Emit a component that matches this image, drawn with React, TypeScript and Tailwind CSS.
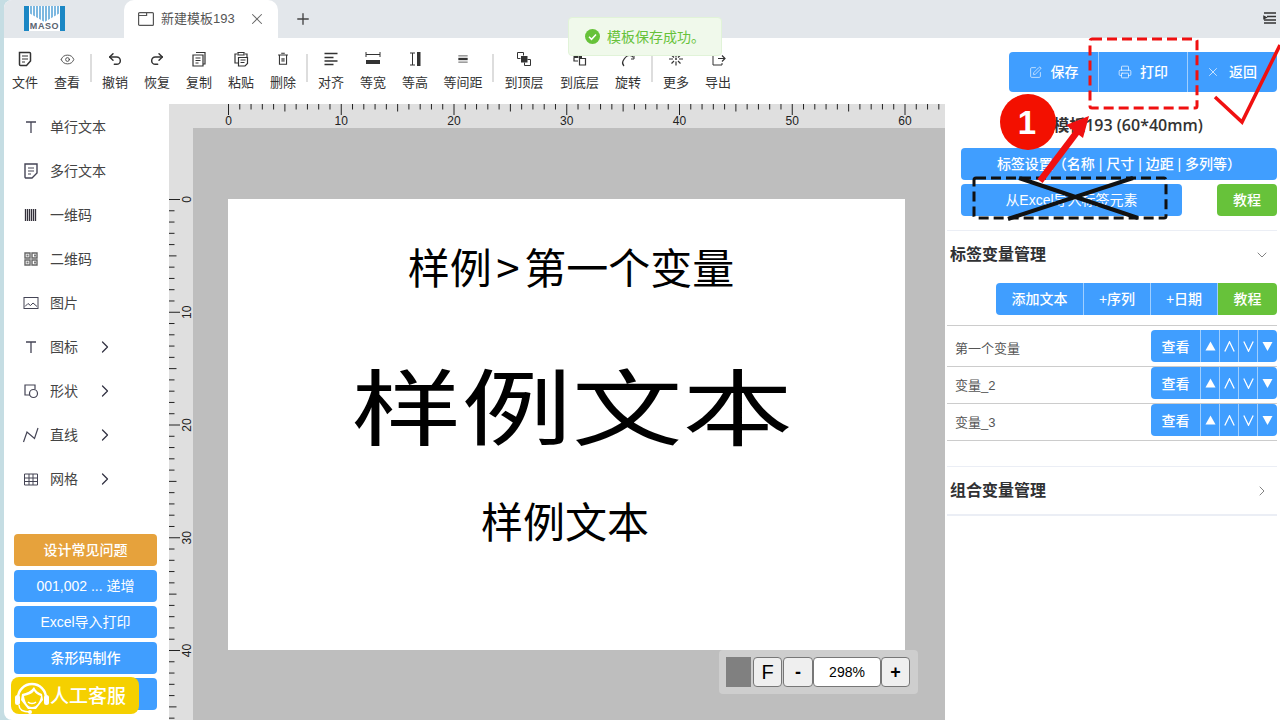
import { ChevronDown, ChevronRight, Eye, Plus, Redo2, Undo2, X, SquarePen, Printer } from 'lucide-react'
import type { ReactNode } from 'react'

const sv = (children: ReactNode, size = 18) => (
  <svg width={size} height={size} viewBox="0 0 18 18" fill="none" stroke="currentColor" strokeWidth="1.2">
    {children}
  </svg>
)

const tools: (null | { label: string; w: string; icon: ReactNode })[] = [
  { label: '文件', w: 'w-[42px]', icon: sv(<><path d="M3.5 2.5h10a1 1 0 0 1 1 1V11l-4 4.500H4.500a1 1 0 0 1-1-1z" strokeWidth="1.500" /><path d="M6 6h6M6 9h6M6 12h3" /></>) },
  { label: '查看', w: 'w-[42px]', icon: <Eye size={15} strokeWidth={1.3} /> },
  null,
  { label: '撤销', w: 'w-[42px]', icon: <Undo2 size={16} strokeWidth={2.2} /> },
  { label: '恢复', w: 'w-[42px]', icon: <Redo2 size={16} strokeWidth={2.2} /> },
  { label: '复制', w: 'w-[42px]', icon: sv(<><path d="M6 2.500h9v11.500h-2" /><path d="M3 5h10v11H3z" /><path d="M5.500 8h5M5.500 10.500h5M5.500 13h3" /></>) },
  { label: '粘贴', w: 'w-[42px]', icon: sv(<><path d="M5 4H3v9h3" /><path d="M13 4h2v4" /><path d="M6 2.500h6V5H6z" /><path d="M6.500 7.500h9v6l-2.500 2.500H6.500z" /><path d="M8.500 10h5M8.500 12.500h4" /></>) },
  { label: '删除', w: 'w-[42px]', icon: sv(<><path d="M3.500 4.500h11M7 2.500h4" /><path d="M5 4.500V15h8V4.500" /><path d="M8 8v4M10 8v4" /></>, 16) },
  null,
  { label: '对齐', w: 'w-[42px]', icon: sv(<path d="M2.500 3.500h13M2.500 7.500h9M2.500 11h13M2.500 14.500h9" strokeWidth="1.700" />) },
  { label: '等宽', w: 'w-[42px]', icon: sv(<><path d="M2 2v5M16 2v5M2 4.500h14" strokeWidth="1" /><rect x="2" y="10" width="14" height="4" fill="currentColor" stroke="none" /></>) },
  { label: '等高', w: 'w-[42px]', icon: sv(<><path d="M4 3h5M4 15h5M6.500 3v12" strokeWidth="1" /><rect x="11" y="2" width="3.500" height="14" fill="currentColor" stroke="none" /></>) },
  { label: '等间距', w: 'w-[54px]', icon: sv(<><path d="M3 5h12M3 13h12" strokeWidth="1" /><rect x="3" y="7.500" width="12" height="3" fill="currentColor" stroke="none" /></>, 14) },
  null,
  { label: '到顶层', w: 'w-[56px]', icon: sv(<><path d="M5.500 8.500h-3v-6h6v3M9.500 12.500v3h6v-6h-3" strokeWidth="1" /><rect x="6" y="6" width="6.500" height="6.500" fill="currentColor" stroke="none" /></>) },
  { label: '到底层', w: 'w-[55px]', icon: sv(<><rect x="2.500" y="3" width="5" height="5" fill="currentColor" stroke="none" /><rect x="8" y="6" width="3" height="3" fill="currentColor" stroke="none" /><path d="M8.500 8.500v6.500h6V8.500zM3 8v3h4" strokeWidth="1.200" /></>) },
  { label: '旋转', w: 'w-[42px]', icon: sv(<><path d="M5 16c-1.500-1.500-2-3-1-5 1.500-3 4-5.500 6.500-5.500 1.500 0 3 .5 4 2" /><path d="M15 6v3h-3" strokeWidth="1" /></>) },
  null,
  { label: '更多', w: 'w-[42px]', icon: sv(<><path d="M9 4v3.500M9 11.500v4M2 9h4M12 9h4M5 5.500l2 2M13 5.500l-2 2M7 11l-2.500 2.500M11 11l2.500 2.500" /><circle cx="9" cy="9" r="1" fill="currentColor" stroke="none" /></>) },
  { label: '导出', w: 'w-[42px]', icon: sv(<><path d="M10 3H4v12h9v-2" strokeWidth="1" /><path d="M9 8.500h7M13 5.500l3 3-3 3" strokeWidth="1.200" /></>) },
]

const side: { label: string; arrow?: boolean; icon: ReactNode }[] = [
  { label: '单行文本', icon: sv(<path d="M4 4h10M9 4v11" strokeWidth="1.300" />) },
  { label: '多行文本', icon: sv(<><path d="M3 2h12v9l-5 5H4a1 1 0 0 1-1-1z" strokeWidth="1.400" /><path d="M6 6h6M6 9h6M6 12h3" /></>) },
  { label: '一维码', icon: sv(<path d="M3.500 3v12M5.500 3v12M7.500 3v12M9.500 3v12M11.500 3v12M13.500 3v12" strokeWidth="1.300" stroke="#33303a" />) },
  { label: '二维码', icon: sv(<><path d="M3 3h5v5H3zM10 3h5v5h-5zM3 10h5v5H3zM10 10h5v5h-5z" strokeWidth="1.400" stroke="#666" /><path d="M4.500 5.500h2M12 5.500h2M4.500 12.500h2M12 12.500h2" strokeWidth="2" stroke="#777" /></>) },
  { label: '图片', icon: sv(<><rect x="2" y="3.500" width="14" height="11" strokeWidth="1" /><path d="M3 12.500l3-3 2.500 2 2.500-2.500 4 3.500" strokeWidth="1" /></>) },
  { label: '图标', arrow: true, icon: sv(<path d="M4 4h10M9 4v11" strokeWidth="1.300" />) },
  { label: '形状', arrow: true, icon: sv(<><path d="M8 13H3V3h10v4" /><circle cx="11.500" cy="11.500" r="4" /></>) },
  { label: '直线', arrow: true, icon: sv(<path d="M1.500 16l3.500-10 7.500 6.500L16 2" />) },
  { label: '网格', arrow: true, icon: sv(<path d="M2.500 4h13v11h-13zM2.500 8h13M2.500 11.500h13M7 4v11M11 4v11" strokeWidth="1" />) },
]

const hTicks = Array.from({ length: 64 }, (_, i) => i)
const vTicks = Array.from({ length: 47 }, (_, i) => i)
const mm = 11.275
const tickLen = (i: number) => (i % 10 === 0 ? 11 : i % 5 === 0 ? 7.5 : 5.5)

function RulerTop() {
  return (
    <svg width="776" height="24" className="block">
      {hTicks.map((i) => (
        <line key={i} x1={59.5 + i * mm} x2={59.5 + i * mm} y1="0" y2={tickLen(i)} stroke="#222" strokeWidth="1" />
      ))}
      {hTicks.filter((i) => i % 10 === 0 && i <= 60).map((i) => (
        <text key={i} x={59.5 + i * mm} y="21" fontSize="12" textAnchor="middle" fill="#222" fontFamily="Liberation Sans">{i}</text>
      ))}
    </svg>
  )
}

function RulerLeft() {
  return (
    <svg width="24" height="592" className="block">
      {vTicks.map((i) => (
        <line key={i} y1={71.5 + i * mm} y2={71.5 + i * mm} x1="0" x2={tickLen(i)} stroke="#222" strokeWidth="1" />
      ))}
      {vTicks.filter((i) => i % 10 === 0).map((i) => (
        <text key={i} transform={`translate(22 ${71.5 + i * mm}) rotate(-90)`} fontSize="12" textAnchor="middle" fill="#222" fontFamily="Liberation Sans">{i}</text>
      ))}
    </svg>
  )
}

const orderIcons = [
  <path key="a" d="M0.500 9.500L5.500 0.500l5 9z" fill="#fff" />,
  <path key="b" d="M0.800 10.500L5.500 0.800 10.200 10.500" fill="none" stroke="#fff" strokeWidth="1.300" />,
  <path key="c" d="M0.800 0.500L5.500 10.200 10.200 0.500" fill="none" stroke="#fff" strokeWidth="1.300" />,
  <path key="d" d="M0.500 1L5.500 10l5-9z" fill="#fff" />,
]

function VarRow({ name, first }: { name: string; first?: boolean }) {
  return (
    <div className={`flex justify-between border-b border-[#ccc] ${first ? 'h-[41px] pt-[4px]' : 'h-[37px]'}`}>
      <span className={`pl-2 text-[13px] text-[#555] ${first ? 'pt-[10px]' : 'pt-[10px]'}`}>{name}</span>
      <div className="flex h-8 w-[126px] overflow-hidden rounded text-white bg-[#409eff] text-sm font-medium">
        <span className="w-[49px] flex items-center justify-center pt-px">查看</span>
        {orderIcons.map((p, i) => (
          <span key={i} className="w-[19px] flex items-center justify-center border-l border-[#a0cfff]">
            <svg width="11" height="11" viewBox="0 0 11 11">{p}</svg>
          </span>
        ))}
      </div>
    </div>
  )
}

function SideButton({ children, color = 'bg-[#409eff]', bold = true }: { children?: ReactNode; color?: string; bold?: boolean }) {
  return (
    <div className={`h-8 w-[143px] rounded flex items-center justify-center text-white text-sm ${color} ${bold ? 'font-medium' : ''}`}>
      {children}
    </div>
  )
}

export default function App() {
  return (
    <div className="relative w-[1280px] h-[720px] overflow-hidden bg-[#c5dde3] pl-1 font-['Liberation_Sans','Noto_Sans_CJK_SC',sans-serif] text-[#333]">
      <div className="h-full flex flex-col rounded-l-lg overflow-hidden bg-white">
        {/* tab bar */}
        <div className="h-[38px] shrink-0 bg-[#e3e7eb] flex items-end relative">
          <div className="w-[120px] h-full pl-5 pt-[6px]">
            <svg width="41" height="25" viewBox="0 0 41 25">
              <rect width="41" height="25" fill="#1b87c4" />
              <rect x="5" width="31" height="18" fill="#fff" />
              <path d="M7 0v12M10 0v14M13 0v15M16 0v16M19 0v17M22 0v17M25 0v16M28 0v15M31 0v14M34 0v12" stroke="#7db8e0" strokeWidth="2" />
              <path d="M5 7l15.500 9L36 7v18H5z" fill="#fff" />
              <text x="20.500" y="23" fontSize="9" fontWeight="700" letterSpacing="0.600" textAnchor="middle" fill="#5a6470" fontFamily="Liberation Sans">MASO</text>
            </svg>
          </div>
          <div className="w-[154px] h-full bg-white rounded-t-[10px] flex items-center pl-[14px] text-[13px] text-[#555]">
            <svg width="16" height="14" viewBox="0 0 16 14" fill="none" stroke="#555" strokeWidth="1.200">
              <rect x="0.600" y="0.600" width="14.800" height="12.800" rx="1" />
              <path d="M0.600 3.500h8V0.600" />
            </svg>
            <span className="ml-[7px]">新建模板193</span>
            <X size={18} className="ml-[13px] text-[#666]" strokeWidth={1.4} />
          </div>
          <div className="h-full flex items-center ml-[16px]">
            <Plus size={18} strokeWidth={1.8} className="text-[#444]" />
          </div>
          <svg width="14" height="12" viewBox="0 0 14 12" className="absolute right-[3px] top-[12px]" fill="none" stroke="#333" strokeWidth="1.500">
            <path d="M1 1h12M4 4.500h9M1 8h12M1 11h12" />
            <path d="M1 4.500l2 1-2 1z" fill="#333" />
          </svg>
        </div>

        <div className="flex flex-1 min-h-0">
          {/* left part */}
          <div className="w-[941px] flex flex-col">
            <div className="h-[66px] shrink-0 flex items-start">
              {tools.map((t, i) =>
                t ? (
                  <div key={t.label} className={`${t.w} h-[66px] pt-[12px] flex flex-col items-center text-[13px] text-[#333]`}>
                    <div className="h-[18px] flex items-center justify-center">{t.icon}</div>
                    <span className="mt-[6px] leading-[18px]">{t.label}</span>
                  </div>
                ) : (
                  <div key={i} className="w-[2px] mx-[2px] h-[28px] mt-[16px] bg-[#ddd]" />
                ),
              )}
            </div>
            <div className="flex flex-1 min-h-0">
              {/* sidebar */}
              <div className="w-[165px] shrink-0 pl-[10px] pt-px">
                {side.map((s) => (
                  <div key={s.label} className="h-[44px] flex items-center text-sm text-[#444] -ml-[10px]">
                    <span className="w-[46px] flex justify-end pr-[10px] text-[#445]">{s.icon}</span>
                    <span className={s.arrow ? 'w-[45px]' : ''}>{s.label}</span>
                    {s.arrow && <ChevronRight size={20} strokeWidth={1.500} className="text-[#334]" />}
                  </div>
                ))}
                <div className="mt-[33px] flex flex-col gap-1 relative">
                  <SideButton color="bg-[#e6a23c]">设计常见问题</SideButton>
                  <SideButton bold={false}>001,002 ... 递增</SideButton>
                  <SideButton bold={false}>Excel导入打印</SideButton>
                  <SideButton>条形码制作</SideButton>
                  <SideButton />
                  <div className="absolute left-[-3px] top-[143px] w-[128px] h-[37px] rounded-lg bg-[#f5d000] flex items-center pl-[2px] text-white text-[19px] font-medium">
                    <svg width="38" height="36" viewBox="0 0 38 36" fill="none">
                      <path d="M5 20a14 14 0 0 1 28 0" stroke="#fff" strokeWidth="2.500" />
                      <path d="M9 16c5-1 9-3 12-7 2 4 5 6 8 7l1 6-7 9H15L8 22z" fill="#fff" />
                      <path d="M11 18c4-1 8-2 10-5 2 3 4 4 7 5-1 6-4 11-9 11s-7-5-8-11z" fill="#f5d000" />
                      <path d="M15 24c2 2 6 2 8 0" stroke="#fff" strokeWidth="1.500" />
                      <rect x="2" y="17" width="5" height="10" rx="2.500" fill="#fff" />
                      <rect x="31" y="17" width="5" height="10" rx="2.500" fill="#fff" />
                      <path d="M6 27c0 5 5 7 11 7" stroke="#fff" strokeWidth="1.500" />
                      <circle cx="17" cy="34" r="2" fill="#fff" />
                    </svg>
                    <span className="-ml-[1px] pt-[3px]">人工客服</span>
                  </div>
                </div>
              </div>
              {/* rulers and canvas */}
              <div className="w-[776px] flex flex-col bg-[#dfdfdf]">
                <RulerTop />
                <div className="flex flex-1 min-h-0">
                  <RulerLeft />
                  <div className="relative flex-1 bg-[#bebebe] pl-[35px] pt-[71px] overflow-hidden font-['Noto_Sans_CJK_SC',sans-serif]">
                    <div className="w-[677px] h-[451px] bg-white text-black flex flex-col items-center">
                      <div className="text-[42px] leading-[60px] mt-[37px] ml-[9px]">样例<span className="mx-[4.5px]">&gt;</span>第一个变量</div>
                      <div className="text-[83px] leading-[100px] mt-[57px] ml-[11px] scale-x-[1.33] whitespace-nowrap">样例文本</div>
                      <div className="text-[42px] leading-[60px] mt-[37px] -ml-[3px]">样例文本</div>
                    </div>
                    <div className="absolute left-[526px] top-[522px] w-[199px] h-[44px] rounded bg-[#cecece] flex items-center pl-[7px] font-['Liberation_Sans',sans-serif] text-black">
                      <div className="w-[25px] h-[30px] bg-[#808080]" />
                      <div className="ml-[2px] w-[29px] h-[30px] rounded-sm border border-[#777] bg-[#efefef] flex items-center justify-center text-xl">F</div>
                      <div className="ml-px w-[30px] h-[30px] rounded-sm border border-[#777] bg-[#efefef] flex items-center justify-center text-lg font-bold">-</div>
                      <div className="w-[68px] h-[30px] rounded-sm border border-[#777] bg-white flex items-center justify-center text-sm">298%</div>
                      <div className="w-[29px] h-[30px] rounded-sm border border-[#777] bg-[#efefef] flex items-center justify-center text-lg font-bold">+</div>
                    </div>
                  </div>
                </div>
              </div>
            </div>
          </div>

          {/* right panel */}
          <div className="w-[335px] pl-[2px] pr-[3px] bg-white text-sm">
            <div className="mt-[14px] ml-[62px] h-10 rounded flex overflow-hidden bg-[#409eff] text-white font-medium">
              <div className="w-[90px] flex items-center justify-center gap-[9px] border-r border-[#a0cfff]"><SquarePen size={13} strokeWidth={1.2} />保存</div>
              <div className="w-[89px] flex items-center justify-center gap-2 border-r border-[#a0cfff]"><Printer size={14} strokeWidth={1.2} />打印</div>
              <div className="flex-1 flex items-center justify-center gap-[9px] pr-[2px]"><X size={14} strokeWidth={1.2} />返回</div>
            </div>
            <div className="mt-[22px] h-[22px] text-center text-base font-semibold leading-[22px] font-['Open_Sans','Noto_Sans_CJK_SC',sans-serif] text-[#333]">新建模板193 (60*40mm)</div>
            <div className="mt-[12px] ml-[14px] h-8 rounded bg-[#409eff] text-white font-medium flex items-center justify-center">标签设置（名称 | 尺寸 | 边距 | 多列等）</div>
            <div className="mt-1 ml-[14px] flex justify-between">
              <div className="w-[221px] h-8 rounded bg-[#409eff] text-white flex items-center justify-center">从Excel导入标签元素</div>
              <div className="w-[60px] h-8 rounded bg-[#67c23a] text-white font-medium flex items-center justify-center">教程</div>
            </div>
            <div className="mt-[14px] border-t border-[#ebeef5] h-[48px] flex items-center justify-between pl-[3px] pr-[7px]">
              <span className="text-[16px] font-semibold text-[#303133] pt-[2px]">标签变量管理</span>
              <ChevronDown size={16} strokeWidth={1.1} className="text-[#555]" />
            </div>
            <div className="mt-[5px] ml-[49px] h-8 rounded flex overflow-hidden text-white font-medium">
              <div className="w-[88px] bg-[#409eff] border-r border-[#a0cfff] flex items-center justify-center">添加文本</div>
              <div className="w-[67px] bg-[#409eff] border-r border-[#a0cfff] flex items-center justify-center">+序列</div>
              <div className="w-[67px] bg-[#409eff] border-r border-[#a0cfff] flex items-center justify-center">+日期</div>
              <div className="flex-1 bg-[#67c23a] flex items-center justify-center">教程</div>
            </div>
            <div className="mt-[10px] border-t border-[#ccc]">
              <VarRow name="第一个变量" first />
              <VarRow name="变量_2" />
              <VarRow name="变量_3" />
            </div>
            <div className="mt-[25px] border-t border-[#ebeef5] h-[50px] border-b-2 border-b-[#ebeef5] flex items-center justify-between pl-[3px] pr-[7px]">
              <span className="text-[16px] font-semibold text-[#303133] pt-[2px]">组合变量管理</span>
              <ChevronRight size={16} strokeWidth={1.1} className="text-[#555]" />
            </div>
          </div>
        </div>
      </div>

      {/* toast */}
      <div className="absolute left-[568px] top-[17px] w-[154px] h-[39px] rounded border border-[#e1f3d8] bg-[#f0f9eb] flex items-center pl-4 text-sm text-[#67c23a]">
        <svg width="15" height="15" viewBox="0 0 15 15">
          <circle cx="7.500" cy="7.500" r="7.500" fill="#67c23a" />
          <path d="M4 7.800l2.500 2.500L11 5.500" fill="none" stroke="#fff" strokeWidth="1.500" />
        </svg>
        <span className="ml-[7px]">模板保存成功。</span>
      </div>

      {/* hand drawn annotations on the screenshot */}
      <svg width="1280" height="720" className="absolute left-0 top-0 pointer-events-none" fill="none">
        <rect x="1090" y="39" width="107" height="69" rx="2" stroke="#f01010" strokeWidth="3" strokeDasharray="10 5" />
        <path d="M1215 97l27 25 38-77" stroke="#f01010" strokeWidth="3.500" />
        <rect x="974" y="178" width="192" height="40" rx="2" stroke="#111" strokeWidth="3" strokeDasharray="10 5" />
        <path d="M1019 178l119 40M1133 178l-125 41" stroke="#111" strokeWidth="4" />
        <path d="M1040 181l37-49" stroke="#f01010" strokeWidth="6.500" />
        <path d="M1089 116l-23 9 17 13z" fill="#f01010" />
        <circle cx="1028" cy="122" r="28" fill="#f31000" />
        <text x="1027" y="134" fontSize="33" fontWeight="700" fill="#fff" textAnchor="middle" fontFamily="Liberation Sans">1</text>
      </svg>
    </div>
  )
}
